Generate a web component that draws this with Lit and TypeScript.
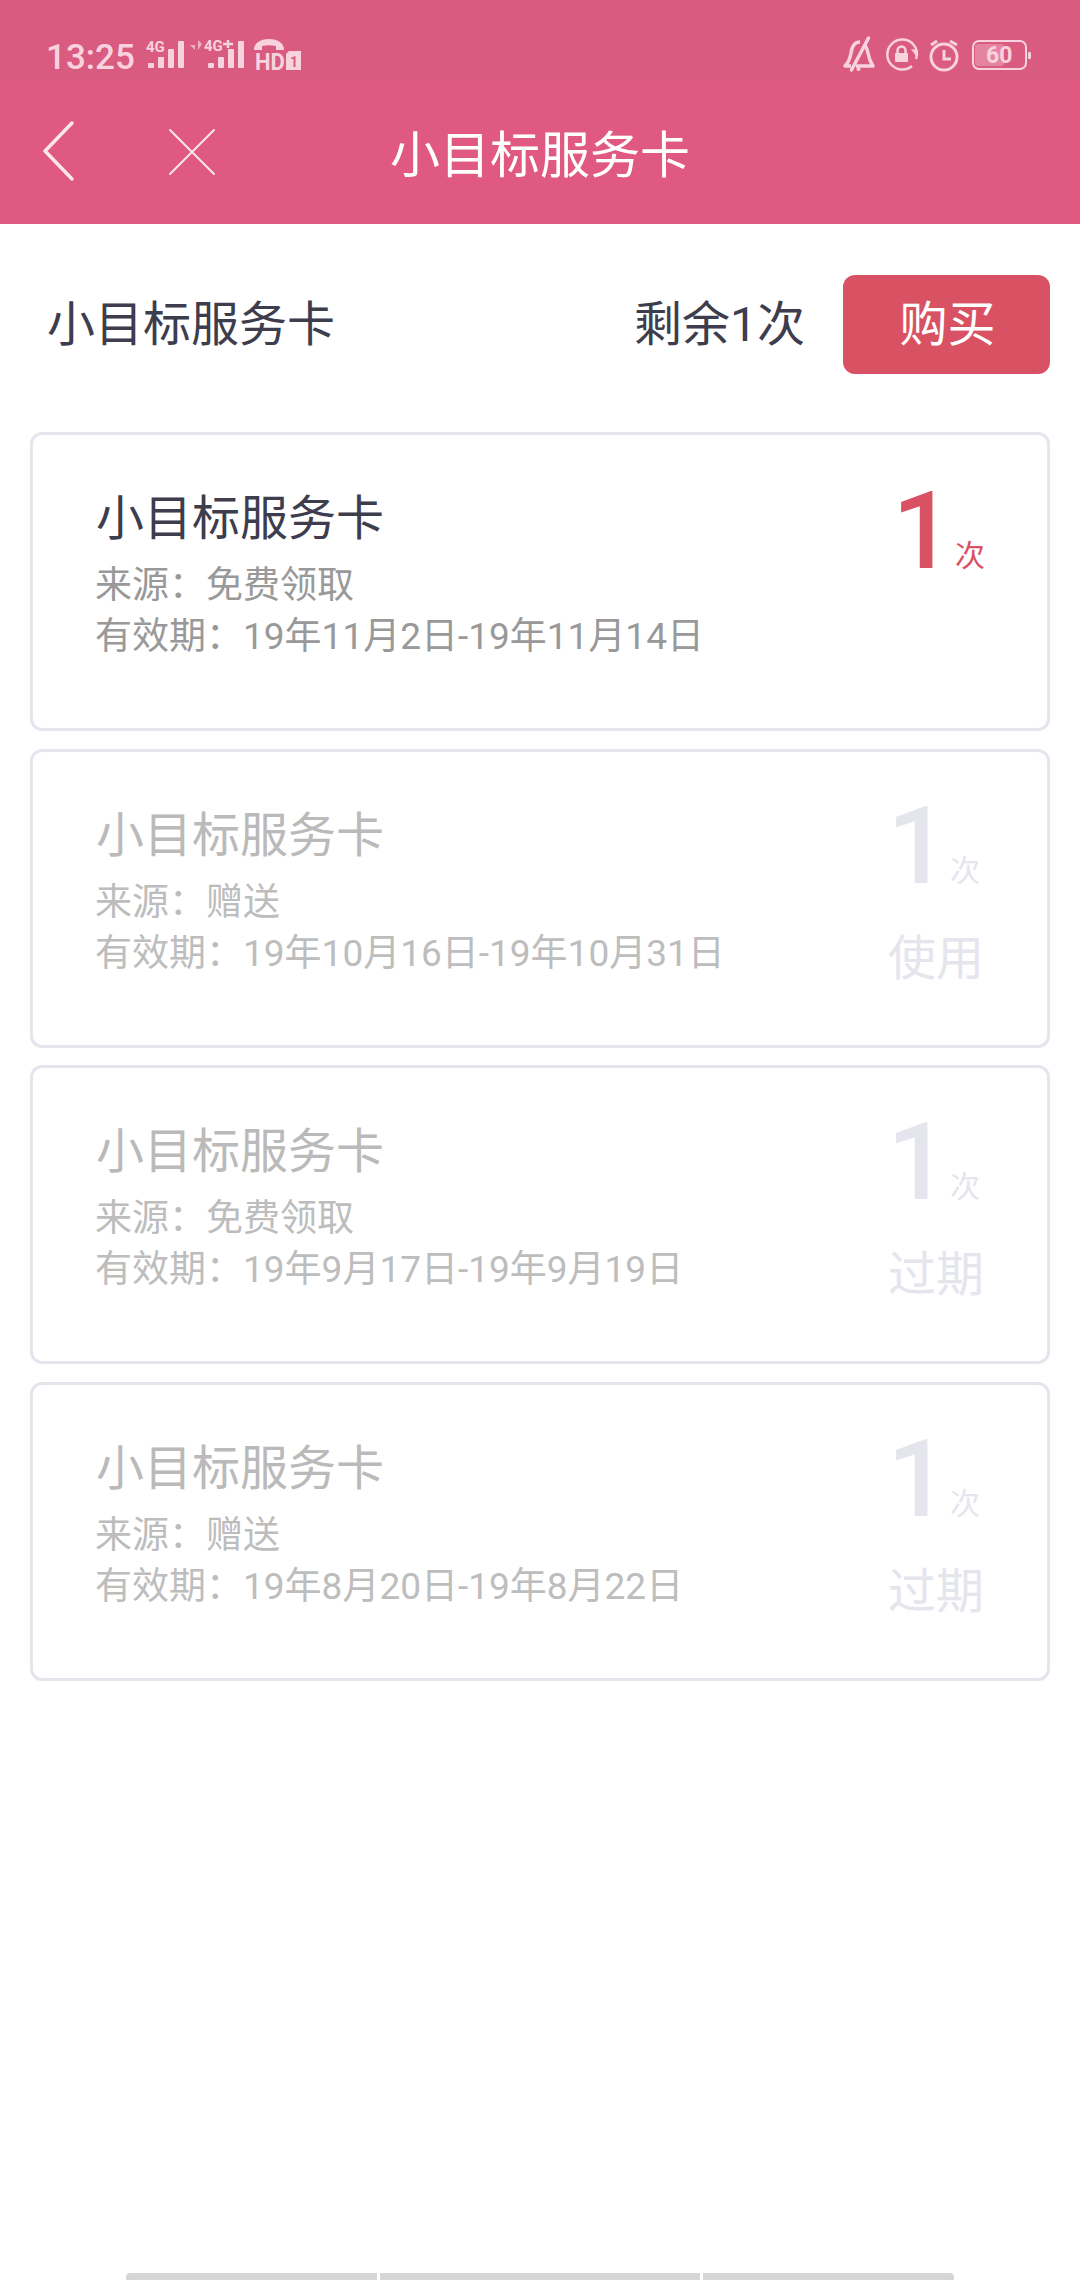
import { LitElement, html, css, svg } from "lit";
import { customElement } from "lit/decorators.js";

interface CardData {
  source: string;
  period: string;
  status?: string;
}

const CARDS: CardData[] = [
  { source: "来源：免费领取", period: "有效期：19年11月2日-19年11月14日" },
  { source: "来源：赠送", period: "有效期：19年10月16日-19年10月31日", status: "使用" },
  { source: "来源：免费领取", period: "有效期：19年9月17日-19年9月19日", status: "过期" },
  { source: "来源：赠送", period: "有效期：19年8月20日-19年8月22日", status: "过期" },
];

const ICON = "#f8d2df";

const bars = (x: number) => svg`
  <rect x="${x}" y="63" width="6" height="5" rx="1" fill="${ICON}"/>
  <rect x="${x + 10}" y="57" width="6" height="11" rx="1" fill="${ICON}"/>
  <rect x="${x + 20}" y="49" width="6" height="19" rx="1" fill="${ICON}"/>
  <rect x="${x + 30}" y="41" width="6" height="27" rx="1" fill="${ICON}"/>`;

@customElement("app-root")
export class AppRoot extends LitElement {
  static styles = css`
    :host {
      display: block;
      width: 1080px;
      height: 2280px;
      position: relative;
      overflow: hidden;
      background: #fff;
      font-family: Roboto, "Noto Sans CJK SC", sans-serif;
      color: #3d3d4d;
    }
    .top {
      background: #df5983;
      height: 224px;
      display: flex;
      flex-direction: column;
    }
    .status {
      height: 80px;
      background: #d95b80;
      box-sizing: border-box;
      padding: 38px 48px 0 46px;
      display: flex;
      align-items: flex-start;
      color: #f8d2df;
    }
    .time {
      font-size: 35px;
      font-weight: 500;
      line-height: 36px;
      margin-right: 9px;
      margin-top: 2px;
    }
    .status svg {
      display: block;
      flex: none;
      overflow: visible;
    }
    .status text {
      font-family: Roboto, sans-serif;
      font-weight: 700;
      fill: #f8d2df;
    }
    .spacer {
      flex: 1;
    }
    .nav {
      flex: 1;
      position: relative;
      box-sizing: border-box;
      padding-top: 8px;
      display: flex;
      align-items: center;
      justify-content: center;
      color: #fff;
      font-size: 50px;
      line-height: 60px;
    }
    .nav svg {
      position: absolute;
      display: block;
    }
    .back {
      left: 40px;
      top: 38px;
    }
    .close {
      left: 166px;
      top: 46px;
    }
    .summary {
      display: flex;
      align-items: center;
      padding: 51px 30px 58px 47px;
      font-size: 48px;
      line-height: 60px;
    }
    .summary .name {
      flex: 1;
    }
    .remain {
      margin-right: 38px;
    }
    .buy {
      width: 207px;
      height: 99px;
      border-radius: 12px;
      background: #d95263;
      color: #fff;
      display: flex;
      align-items: center;
      justify-content: center;
      padding-left: 2px;
      box-sizing: border-box;
    }
    .cards {
      display: flex;
      flex-direction: column;
      gap: 17.67px;
      padding: 0 30px;
    }
    .card {
      box-sizing: border-box;
      height: 299px;
      border: 3px solid #e4e5ed;
      border-radius: 12px;
      padding: 54px 0 0 63px;
      display: flex;
      justify-content: space-between;
    }
    .title {
      font-size: 48px;
      line-height: 60px;
    }
    .meta {
      font-size: 37px;
      line-height: 51px;
      color: #999;
      margin-left: -1px;
    }
    .source {
      margin-top: 11px;
    }
    .count {
      display: flex;
      flex-direction: column;
      align-items: flex-end;
      margin: -11px 67px 0 0;
      color: #e4e5ed;
    }
    .num {
      display: flex;
      align-items: baseline;
      line-height: 104px;
    }
    .one {
      font-size: 107px;
      font-weight: 500;
    }
    .unit {
      font-size: 30px;
      margin-left: 2px;
      transform: translateY(-2px);
    }
    .state {
      font-size: 48px;
      line-height: 60px;
      margin: 4px -4px 0 0;
    }
    .active .count {
      color: #d95263;
      margin: -9px 62px 0 0;
    }
    .used .title {
      color: #bababa;
    }
    .used .meta {
      color: #bdbdbd;
    }
    .home {
      position: absolute;
      left: 126px;
      bottom: 0;
      display: flex;
      gap: 3px;
      height: 7px;
    }
    .home i {
      display: block;
      background: #d6d6d6;
    }
    .home i:first-child {
      width: 251px;
      border-radius: 4px 0 0 0;
    }
    .home i:nth-child(2) {
      width: 320px;
    }
    .home i:last-child {
      width: 251px;
      border-radius: 0 4px 0 0;
    }
  `;

  private statusLeft() {
    return html`
      <svg width="165" height="36" viewBox="142 38 165 36">
        <text x="144" y="52" font-size="15">4G</text>
        ${bars(146)}
        <path d="M193 40v10l-5-5h5zM196 40v10l4-6z" fill="${ICON}" fill-opacity=".7"/>
        <text x="202" y="51" font-size="15">4G</text>
        <path d="M221 44h10M226 40v8" stroke="${ICON}" stroke-width="2.500" fill="none"/>
        ${bars(206)}
        <path d="M252 50c0-7 6-11 15-11s15 4 15 11h-8v-4c-5-1-9-1-14 0v4z" fill="${ICON}"/>
        <text x="253" y="70" font-size="23" textLength="30" lengthAdjust="spacingAndGlyphs">HD</text>
        <path d="M284 54l3-3h12v19h-15z" fill="${ICON}"/>
        <text x="288" y="67" font-size="14" style="fill:#d95b80">1</text>
      </svg>
    `;
  }

  private statusRight() {
    return html`
      <svg width="188" height="34" viewBox="845 38 188 34">
        <path d="M852 66h-6c3-3 5-7 6-13 1-7 4-11 9-11M865 44c2 2 3 5 4 9 1 6 3 10 5 13h-17" fill="none" stroke="${ICON}" stroke-width="3.500" stroke-linejoin="round"/>
        <path d="M869.500 38 852.500 70" stroke="${ICON}" stroke-width="3.500" stroke-linecap="round" fill="none"/>
        <circle cx="859.500" cy="69" r="2" fill="${ICON}"/>

        <path d="M914 44A15 15 0 1 0 913 66M917 59A15 15 0 0 0 914 44" fill="none" stroke="${ICON}" stroke-width="2.500"/>
        <path d="M912 49l6 1-1 6z" fill="${ICON}"/>
        <rect x="896" y="53" width="13" height="9" rx="1" fill="${ICON}"/>
        <path d="M898.500 54v-3.500a4 4 0 0 1 8 0V54" fill="none" stroke="${ICON}" stroke-width="2.500"/>

        <circle cx="945" cy="57" r="13" fill="none" stroke="${ICON}" stroke-width="3"/>
        <path d="M945 50v9h7M932 45l6-4M958 45l-7-4" fill="none" stroke="${ICON}" stroke-width="3"/>

        <rect x="974" y="41" width="53" height="28" rx="6" fill="none" stroke="${ICON}" stroke-width="2"/>
        <rect x="976" y="44" width="29" height="22" rx="3" fill="${ICON}" fill-opacity=".35"/>
        <rect x="1029" y="52" width="3" height="7" rx="1" fill="${ICON}"/>
        <text x="987" y="63" font-size="23">60</text>
      </svg>
    `;
  }

  render() {
    return html`
      <div class="top">
        <div class="status">
          <span class="time">13:25</span>
          ${this.statusLeft()}
          <span class="spacer"></span>
          ${this.statusRight()}
        </div>
        <div class="nav">
          <svg class="back" width="36" height="64" viewBox="0 0 36 64">
            <path d="M32 5 5 33l27 28" fill="none" stroke="#fbe6ed" stroke-width="3.500" stroke-linecap="round" stroke-linejoin="round"/>
          </svg>
          <svg class="close" width="52" height="52" viewBox="0 0 52 52">
            <path d="M4 4l44 44M48 4 4 48" fill="none" stroke="#fbe6ed" stroke-width="2" stroke-linecap="round"/>
          </svg>
          小目标服务卡
        </div>
      </div>
      <div class="summary">
        <span class="name">小目标服务卡</span>
        <span class="remain">剩余1次</span>
        <div class="buy">购买</div>
      </div>
      <div class="cards">
        ${CARDS.map(
          (c) => html`
            <div class="card ${c.status ? "used" : "active"}">
              <div>
                <div class="title">小目标服务卡</div>
                <div class="meta source">${c.source}</div>
                <div class="meta">${c.period}</div>
              </div>
              <div class="count">
                <div class="num"><span class="one">1</span><span class="unit">次</span></div>
                ${c.status ? html`<div class="state">${c.status}</div>` : ""}
              </div>
            </div>
          `
        )}
      </div>
      <div class="home"><i></i><i></i><i></i></div>
    `;
  }
}
